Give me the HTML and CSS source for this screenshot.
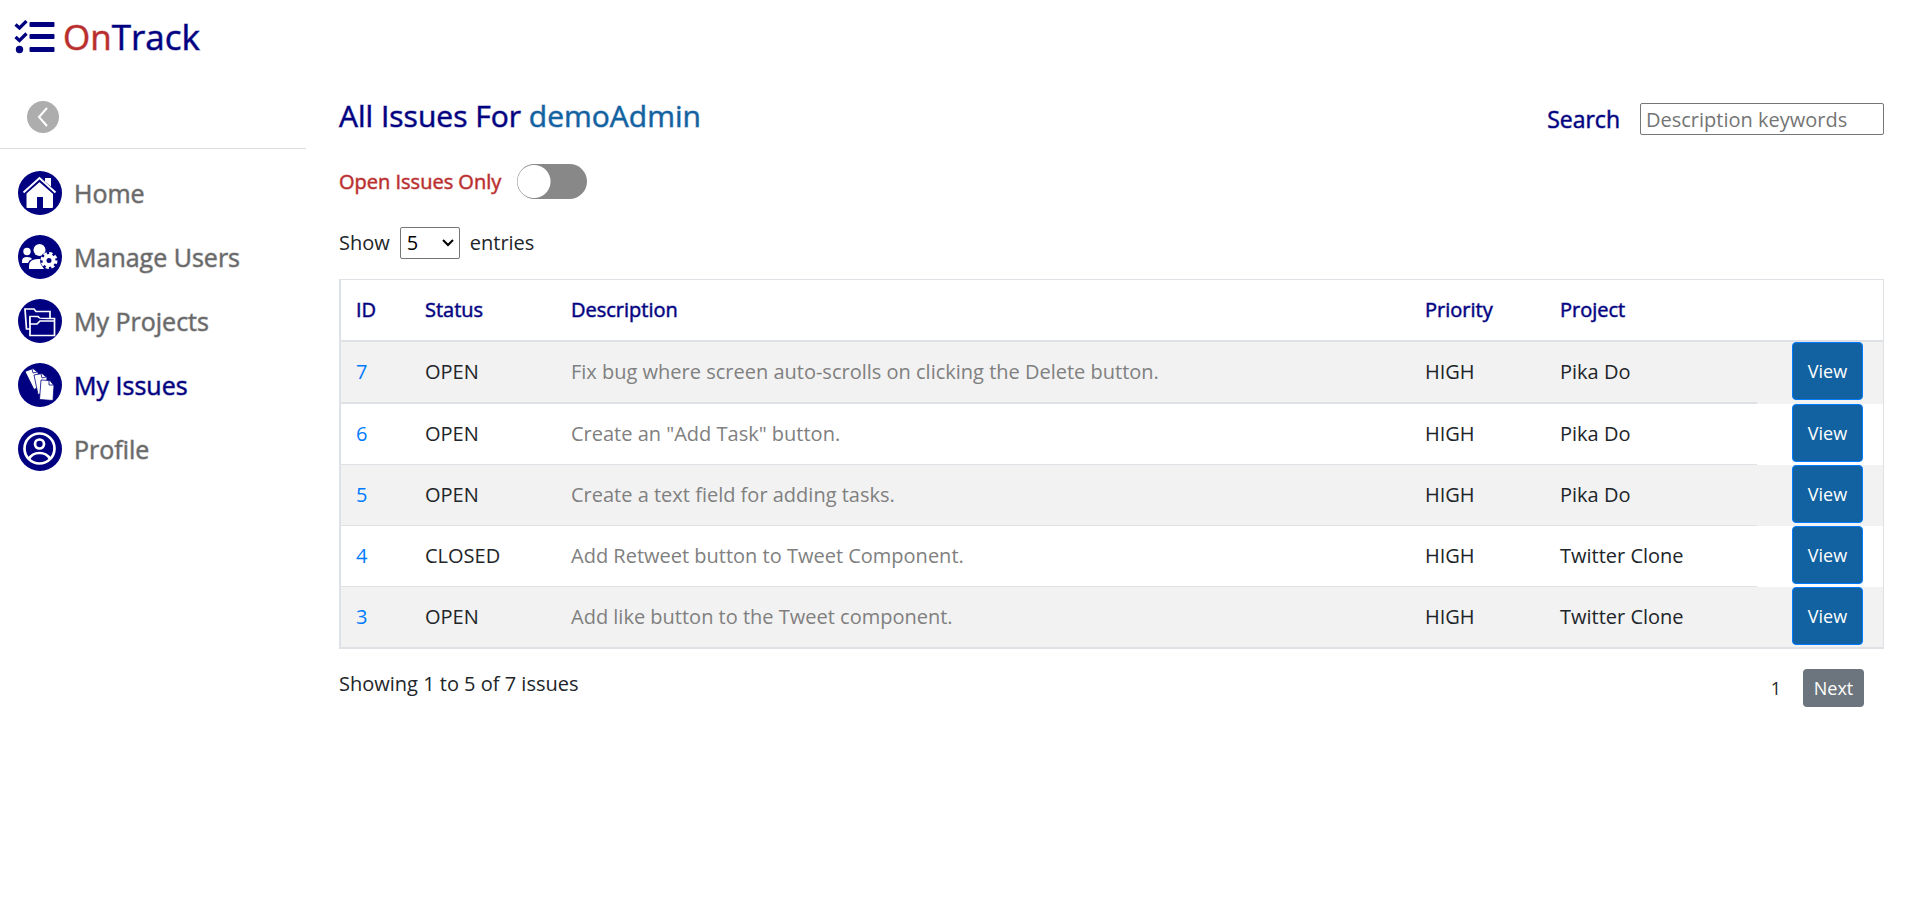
FILE: index.html
```html
<!DOCTYPE html>
<html lang="en">
<head>
<meta charset="utf-8">
<title>OnTrack - My Issues</title>
<link rel="stylesheet" href="styles.css">
</head>
<body>
<header class="topbar">
  <a class="brand" href="#">
    <svg class="brand-icon" viewBox="0 0 40 34" aria-hidden="true">
      <path d="M1 4.500l4 3.500 7-7M1 17l4 3.500 7-7" fill="none" stroke="currentColor" stroke-width="3.200"/>
      <circle cx="5" cy="29.500" r="3.700"/>
      <rect x="15" y="2" width="25" height="5" rx="1"/>
      <rect x="15" y="14" width="25" height="5" rx="1"/>
      <rect x="15" y="27" width="25" height="5" rx="1"/>
    </svg>
    <span class="brand-name"><span class="brand-accent">On</span>Track</span>
  </a>
</header>
<div class="layout">
  <aside class="sidebar">
    <div class="collapse-row">
      <button class="collapse" type="button" aria-label="Collapse menu">
        <svg viewBox="0 0 32 32" aria-hidden="true"><path d="M20 7l-8 9 8 9" fill="none" stroke="#fff" stroke-width="2"/></svg>
      </button>
    </div>
    <nav class="nav">
      <a class="nav-link" href="#">
        <svg class="nav-icon" viewBox="0 0 44 44" aria-hidden="true">
          <circle class="disc" cx="22" cy="22" r="22"/>
          <path d="M27 7h6v9l-6-5zM8.500 22L21.500 10 35 22v14q0 1-1 1h-9V26h-6v11H9.500q-1 0-1-1z" fill="#fff"/>
          <path d="M6 22L21.500 8.500 37 22" fill="none" stroke="#000080" stroke-width="4"/>
          <path d="M5.500 21.500L21.500 7 37.500 21.500" fill="none" stroke="#fff" stroke-width="2"/>
        </svg>
        <span>Home</span>
      </a>
      <a class="nav-link" href="#">
        <svg class="nav-icon" viewBox="0 0 44 44" aria-hidden="true">
          <circle class="disc" cx="22" cy="22" r="22"/>
          <g fill="#fff">
            <circle cx="9" cy="16.500" r="3.700"/><circle cx="21.500" cy="15" r="6"/>
            <path d="M4 28v-2q0-4 5-4 4 0 5 2-3 1-4 4zM11 34v-3q0-7 9-7h6l-3 5 3 5z"/>
            <circle cx="31" cy="25.500" r="9" fill="#000080"/>
            <circle cx="31" cy="25.500" r="4.500" fill="none" stroke="#fff" stroke-width="4"/>
            <circle cx="31" cy="25.500" r="7" fill="none" stroke="#fff" stroke-width="3" stroke-dasharray="3.200 2.298"/>
          </g>
        </svg>
        <span>Manage Users</span>
      </a>
      <a class="nav-link" href="#">
        <svg class="nav-icon" viewBox="0 0 44 44" aria-hidden="true">
          <circle class="disc" cx="22" cy="22" r="22"/>
          <g fill="#000080" stroke="#fff" stroke-width="1.700">
            <path d="M8.500 30L7 10h9l2 2.500h14V30z"/>
            <path d="M12 36.500V17.500h8l2 2h14.500v17z"/><path d="M12 18v7h7l3-3h14"/>
          </g>
        </svg>
        <span>My Projects</span>
      </a>
      <a class="nav-link active" href="#" aria-current="page">
        <svg class="nav-icon" viewBox="0 0 44 44" aria-hidden="true">
          <circle class="disc" cx="22" cy="22" r="22"/>
          <g fill="#fff" stroke="#000080" stroke-width="0.800">
            <path d="M7 8.500L15 5.500l5 4 2 14-6 3z"/><path d="M14 6l1 4 4-1" fill="none"/>
            <path d="M16 12l8-1.500 5 4-1 15-8 2z"/><path d="M23 11l1 4 4-1" fill="none"/>
            <path d="M23 17l9 .5 4 5-1 15-13.500-1z"/><path d="M31 17.500v4.500h5" fill="none"/>
          </g>
        </svg>
        <span>My Issues</span>
      </a>
      <a class="nav-link" href="#">
        <svg class="nav-icon" viewBox="0 0 44 44" aria-hidden="true">
          <circle class="disc" cx="22" cy="22" r="22"/>
          <g fill="none" stroke="#fff" stroke-width="2.700"><circle cx="21.500" cy="21.500" r="15"/><circle cx="21.500" cy="17" r="4.500"/><path d="M11 32q3-6 10.500-6T32 32"/></g>
        </svg>
        <span>Profile</span>
      </a>
    </nav>
  </aside>
  <main class="content">
    <div class="heading-row">
      <h1 class="title">All Issues For <span class="user">demoAdmin</span></h1>
      <div class="search">
        <label class="search-label" for="search">Search</label>
        <input class="search-input" id="search" type="text" placeholder="Description keywords">
      </div>
    </div>
    <div class="filter">
      <label class="filter-label" for="open-only">Open Issues Only</label>
      <input class="switch" id="open-only" type="checkbox" role="switch">
    </div>
    <div class="entries">
      <label for="entries">Show</label>
      <span class="select-wrap">
        <select class="entries-select" id="entries"><option>5</option><option>10</option><option>25</option></select>
        <svg class="chevron" viewBox="0 0 12 8" aria-hidden="true"><path d="M1 1l5 5 5-5" fill="none" stroke="#000" stroke-width="2"/></svg>
      </span>
      <span>entries</span>
    </div>
    <table class="issues">
      <colgroup><col class="col-id"><col class="col-status"><col><col class="col-priority"><col class="col-project"><col class="col-action"></colgroup>
      <thead><tr><th>ID</th><th>Status</th><th>Description</th><th>Priority</th><th>Project</th><th></th></tr></thead>
      <tbody>
        <tr><td><a href="#">7</a></td><td>OPEN</td><td class="desc">Fix bug where screen auto-scrolls on clicking the Delete button.</td><td>HIGH</td><td>Pika Do</td><td class="action"><button class="view" type="button">View</button></td></tr>
        <tr><td><a href="#">6</a></td><td>OPEN</td><td class="desc">Create an "Add Task" button.</td><td>HIGH</td><td>Pika Do</td><td class="action"><button class="view" type="button">View</button></td></tr>
        <tr><td><a href="#">5</a></td><td>OPEN</td><td class="desc">Create a text field for adding tasks.</td><td>HIGH</td><td>Pika Do</td><td class="action"><button class="view" type="button">View</button></td></tr>
        <tr><td><a href="#">4</a></td><td>CLOSED</td><td class="desc">Add Retweet button to Tweet Component.</td><td>HIGH</td><td>Twitter Clone</td><td class="action"><button class="view" type="button">View</button></td></tr>
        <tr><td><a href="#">3</a></td><td>OPEN</td><td class="desc">Add like button to the Tweet component.</td><td>HIGH</td><td>Twitter Clone</td><td class="action"><button class="view" type="button">View</button></td></tr>
      </tbody>
    </table>
    <div class="footer-row">
      <p class="summary">Showing 1 to 5 of 7 issues</p>
      <div class="pager"><span>1</span><button class="next" type="button">Next</button></div>
    </div>
  </main>
</div>
</body>
</html>
```
FILE: styles.css
```css
* { box-sizing: border-box; }
body { margin: 0; background: #fff; color: #212529; font: 400 20px/28px "Open Sans", sans-serif; }
a { color: #007bff; text-decoration: none; }
button, input, select { font: inherit; }
.brand-name, .nav-link, .title, .user, .brand-accent, .search-label, .filter-label, .issues th { font-weight: 400; -webkit-text-stroke: 1px color-mix(in srgb, currentColor 50%, transparent); }
.topbar { height: 80px; padding: 12px 14px; }
.brand { display: inline-flex; align-items: center; gap: 8px; color: #000080; }
.brand-icon { width: 41px; height: 34px; fill: currentColor; }
.brand-name { font-size: 35px; line-height: 50px; }
.brand-accent { color: #b92d2d; }
.layout { display: flex; gap: 33px; padding-right: 29px; }
.sidebar { flex: 0 0 306px; }
.collapse-row { padding: 21px 27px 14px; height: 69px; border-bottom: 1px solid #dedede; }
.collapse { display: block; width: 32px; height: 32px; padding: 0; border: 0; border-radius: 50%; background: #adadad; }
.collapse svg { display: block; width: 32px; height: 32px; }
.nav { display: flex; flex-direction: column; gap: 20px; padding: 22px 18px; }
.nav-link { display: flex; align-items: center; gap: 12px; color: #696969; font-size: 25px; line-height: 44px; }
.nav-link.active { color: #000080; }
.nav-icon { width: 44px; height: 44px; }
.disc { fill: #000080; }
.content { flex: 1; min-width: 0; padding-top: 14px; }
.heading-row { display: flex; justify-content: space-between; align-items: flex-start; height: 46px; }
.title { margin: 0; color: #000080; font-size: 30px; line-height: 44px; }
.user { color: #1261a0; }
.search { display: flex; align-items: center; gap: 20px; padding-top: 9px; }
.search-label { color: #000080; font-size: 23px; }
.search-input { width: 244px; height: 32px; padding: 1px 5px; border: 1px solid #767676; border-radius: 2px; }
.search-input::placeholder { color: #757575; opacity: 1; }
.filter { display: flex; align-items: center; gap: 16px; margin-top: 24px; height: 35px; }
.filter-label { color: #b92d2d; }
.switch { appearance: none; margin: 0; width: 70px; height: 35px; border-radius: 18px; background: radial-gradient(circle at 17px 50%, #fff 16px, #888 17px); }
.entries { display: flex; align-items: center; gap: 10px; margin-top: 28px; height: 32px; }
.select-wrap { display: grid; align-items: center; }
.select-wrap > * { grid-area: 1 / 1; }
.entries-select { appearance: none; width: 60px; height: 32px; padding: 0 6px; border: 1px solid #767676; border-radius: 2px; background: #fff; color: #000; }
.chevron { justify-self: end; width: 12px; height: 8px; margin-right: 6px; pointer-events: none; }
.issues { width: 100%; margin-top: 20px; table-layout: fixed; border-collapse: separate; border-spacing: 0; border: solid #dee2e6; border-width: 1px 1px 2px 2px; }
.col-id { width: 69px; }
.col-status { width: 146px; }
.col-priority { width: 135px; }
.col-project { width: 212px; }
.col-action { width: 126px; }
.issues th { padding: 16px 15px; border-bottom: 2px solid #dee2e6; color: #000080; text-align: left; }
.issues td { padding: 16px 15px; border-bottom: 1px solid #dee2e6; }
.issues tbody tr:nth-child(odd) { background: #f2f2f2; }
.issues tbody tr:first-child td { border-bottom-width: 2px; }
.issues tbody tr:last-child td { border-bottom: 0; }
.issues .desc { color: #808080; }
.issues tbody tr td.action { padding: 0 20px 0 35px; border: 0; vertical-align: top; }
.view { display: block; width: 100%; height: 58px; padding: 0; border: 1px solid #007bff; border-radius: 4px; background: #1261a0; color: #fff; font-size: 18px; }
.footer-row { display: flex; justify-content: space-between; align-items: flex-start; padding: 20px 20px 0 0; }
.summary { margin: 0; line-height: 30px; }
.pager { display: flex; align-items: center; gap: 22px; font-size: 18px; }
.next { height: 38px; width: 61px; padding: 0; border: 0; border-radius: 4px; background: #6c757d; color: #fff; }
```
